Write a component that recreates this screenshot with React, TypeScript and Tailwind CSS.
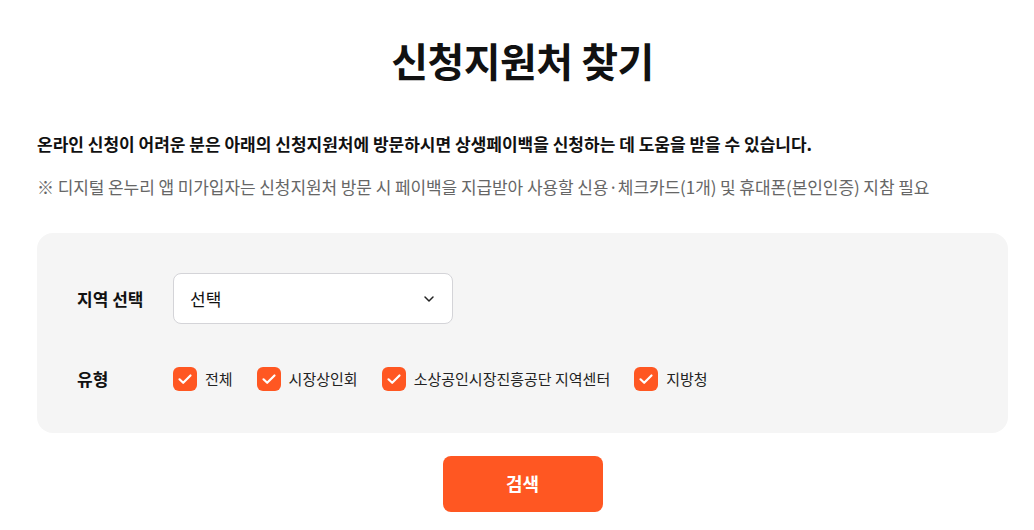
import React from "react";

const font = { fontFamily: '"Noto Sans CJK KR", "Noto Sans", sans-serif' };

function Check() {
  return (
    <span className="flex h-6 w-6 items-center justify-center rounded-md bg-[#ff5722]">
      <svg width="24" height="24" viewBox="0 0 24 24" fill="none">
        <path d="M6.5 12.3 L10.2 15.8 L17.5 8.5" stroke="white" strokeWidth="2.2" strokeLinecap="round" strokeLinejoin="round" />
      </svg>
    </span>
  );
}

export default function App() {
  const types = ["전체", "시장상인회", "소상공인시장진흥공단 지역센터", "지방청"];
  return (
    <div className="min-h-[530px] bg-white text-[#111]" style={font}>
      <div className="ml-[37px] w-[971px] pt-[33px]">
        <h1 className="text-center text-[40px] font-bold leading-[54px] tracking-[-0.5px] text-[#111]">신청지원처 찾기</h1>
        <p className="mt-[45px] text-[17px] font-bold leading-[24px] text-[#111]">
          온라인 신청이 어려운 분은 아래의 신청지원처에 방문하시면 상생페이백을 신청하는 데 도움을 받을 수 있습니다.
        </p>
        <p className="mt-[19px] text-[17px] leading-[24px] tracking-[-0.08px] text-[#666]">
          ※ 디지털 온누리 앱 미가입자는 신청지원처 방문 시 페이백을 지급받아 사용할 신용·체크카드(1개) 및 휴대폰(본인인증) 지참 필요
        </p>
        <div className="mt-[34px] rounded-2xl bg-[#f5f5f5] px-10 pt-10 pb-[41px]">
          <div className="flex items-center">
            <span className="w-24 text-[17px] font-bold text-[#111]">지역 선택</span>
            <div className="flex h-[51px] w-[280px] items-center justify-between rounded-lg border border-[#d4d4d8] bg-white pl-4 pr-[16px]">
              <span className="text-[17px] text-[#111]">선택</span>
              <svg width="14" height="14" viewBox="0 0 14 14" fill="none">
                <path d="M3 5 L7 9 L11 5" stroke="#222" strokeWidth="1.5" strokeLinecap="round" strokeLinejoin="round" />
              </svg>
            </div>
          </div>
          <div className="mt-[42px] flex items-center">
            <span className="w-24 text-[17px] font-bold text-[#111]">유형</span>
            <div className="flex items-center gap-6">
              {types.map((t) => (
                <label key={t} className="flex items-center gap-2">
                  <Check />
                  <span className="text-[15px] text-[#222]">{t}</span>
                </label>
              ))}
            </div>
          </div>
        </div>
        <div className="mt-[23px] flex justify-center">
          <button className="h-14 w-40 rounded-lg bg-[#ff5722] text-[18px] font-bold text-white">검색</button>
        </div>
      </div>
    </div>
  );
}
